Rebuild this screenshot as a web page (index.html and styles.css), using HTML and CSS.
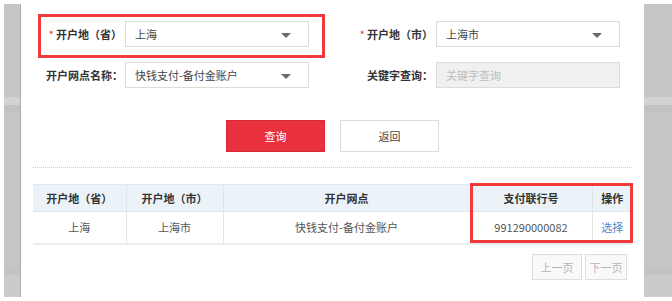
FILE: index.html
```html
<!DOCTYPE html>
<html lang="zh-CN">

<head>
  <meta charset="UTF-8">
  <title>开户网点查询</title>
  <link rel="stylesheet" href="styles.css">
</head>

<body>
  <div class="page">
    <div class="backdrop backdrop-left"></div>

    <div class="panel">
      <div class="form">
        <div class="field marked">
          <label class="field-label"><span class="req">*</span>开户地（省）</label>
          <div class="select">上海<span class="caret"></span></div>
        </div>
        <div class="field">
          <label class="field-label"><span class="req">*</span>开户地（市）</label>
          <div class="select">上海市<span class="caret"></span></div>
        </div>
        <div class="field">
          <label class="field-label">开户网点名称：</label>
          <div class="select">快钱支付-备付金账户<span class="caret"></span></div>
        </div>
        <div class="field">
          <label class="field-label">关键字查询：</label>
          <input class="text-input" type="text" placeholder="关键字查询" disabled>
        </div>
      </div>

      <div class="actions">
        <button class="btn btn-primary">查询</button>
        <button class="btn btn-default">返回</button>
      </div>

      <div class="divider"></div>

      <div class="result">
        <table class="grid">
          <thead>
            <tr>
              <th class="col-prov">开户地（省）</th>
              <th class="col-city">开户地（市）</th>
              <th class="col-branch">开户网点</th>
              <th class="col-code">支付联行号</th>
              <th class="col-op">操作</th>
            </tr>
          </thead>
          <tbody>
            <tr>
              <td>上海</td>
              <td>上海市</td>
              <td>快钱支付-备付金账户</td>
              <td>991290000082</td>
              <td><a class="link" href="#">选择</a></td>
            </tr>
          </tbody>
        </table>
        <div class="mark-cols"></div>
      </div>

      <div class="pager">
        <button class="page-btn prev">上一页</button>
        <button class="page-btn next">下一页</button>
      </div>
    </div>

    <div class="backdrop backdrop-right"></div>
  </div>
</body>

</html>
```

FILE: styles.css
```css
* {
  margin: 0;
  padding: 0;
  box-sizing: border-box;
}

body {
  font-family: 'Noto Sans CJK SC', 'Noto Sans', sans-serif;
  font-size: 11px;
  color: #333;
  background: #fff;
}

.page {
  display: flex;
  height: 301px;
  overflow: hidden;
}

/* grey page behind the dialog */
.backdrop {
  margin-top: 4px;
  height: 293px;
  background: linear-gradient(to bottom,
      #c6c6c6 0, #c6c6c6 93px,
      #d2d2d2 93px, #d2d2d2 101px,
      #c2c2c2 101px, #c2c2c2 109px,
      #c6c6c6 109px, #c6c6c6 262px,
      #c2c2c2 262px, #c2c2c2 271px,
      #cbcbcb 271px);
}

.backdrop-left {
  width: 17px;
  margin-left: 4px;
  border-right: 1px solid #ababab;
}

.backdrop-right {
  flex: 1;
}

.panel {
  width: 623px;
  padding: 21px 12px 0 12px;
}

/* search form */
.form {
  display: grid;
  grid-template-columns: 263px 263px;
  column-gap: 48px;
  row-gap: 15px;
  padding-left: 13px;
}

.field {
  display: flex;
  align-items: center;
  position: relative;
}

.field-label {
  width: 76px;
  margin-right: 3px;
  text-align: right;
  font-weight: bold;
  color: #333;
  white-space: nowrap;
}

.req {
  color: #e83a3a;
  font-weight: normal;
  margin-right: 2px;
}

.select {
  position: relative;
  width: 184px;
  height: 26px;
  line-height: 24px;
  padding-left: 9px;
  border: 1px solid #dcdcdc;
  background: #fff;
  color: #444;
}

.caret {
  position: absolute;
  right: 17px;
  top: 11px;
  width: 0;
  height: 0;
  border-left: 5px solid transparent;
  border-right: 5px solid transparent;
  border-top: 5px solid #6a6a6a;
}

.text-input {
  width: 184px;
  height: 26px;
  padding-left: 9px;
  border: 1px solid #dcdcdc;
  background: #f0f0f0;
  font: inherit;
  color: #444;
}

.text-input::placeholder {
  color: #bdbdbd;
}

/* red highlight frames */
.marked::after {
  content: '';
  position: absolute;
  top: -7px;
  left: -8px;
  right: -16px;
  bottom: -11px;
  border: 3px solid #f03a3c;
}

.actions {
  display: flex;
  justify-content: center;
  gap: 15px;
  margin-top: 32px;
}

.btn {
  width: 99px;
  height: 32px;
  font: inherit;
  font-size: 11px;
  cursor: pointer;
}

.btn-primary {
  background: #e8303f;
  border: 1px solid #d42a37;
  color: #fff;
}

.btn-default {
  background: #fff;
  border: 1px solid #dcdcdc;
  color: #444;
}

.divider {
  margin-top: 15px;
  border-top: 1px dotted #b9d3e6;
}

/* results */
.result {
  position: relative;
  margin-top: 16px;
}

.grid {
  width: 599px;
  border-collapse: collapse;
  table-layout: fixed;
  text-align: center;
}

.grid th {
  height: 27px;
  background: #ebf3f9;
  font-weight: bold;
  color: #333;
  border-top: 1px solid #e2e8ee;
  border-left: 1px solid #dfe4e8;
}

.grid td {
  height: 32px;
  color: #555;
  border-left: 1px solid #e3e3e3;
  border-top: 1px solid #e6e6e6;
  border-bottom: 2px solid #ececec;
}

.grid th:first-child,
.grid td:first-child {
  border-left: none;
}

.col-prov {
  width: 93px;
}

.col-city {
  width: 97px;
}

.col-branch {
  width: 247px;
}

.col-code {
  width: 122px;
}

.col-op {
  width: 40px;
}

.link {
  color: #4a8bd0;
  text-decoration: none;
}

.mark-cols {
  position: absolute;
  top: -1px;
  left: 437px;
  width: 163px;
  height: 60px;
  border: 3px solid #f03a3c;
}

.pager {
  display: flex;
  justify-content: flex-end;
  gap: 3px;
  width: 594px;
  margin-top: 9px;
}

.page-btn {
  height: 26px;
  background: #f9f9f9;
  border: 1px solid #dedede;
  color: #b5b5b5;
  font: inherit;
  font-size: 11px;
}

.prev {
  width: 50px;
}

.next {
  width: 42px;
}
```
